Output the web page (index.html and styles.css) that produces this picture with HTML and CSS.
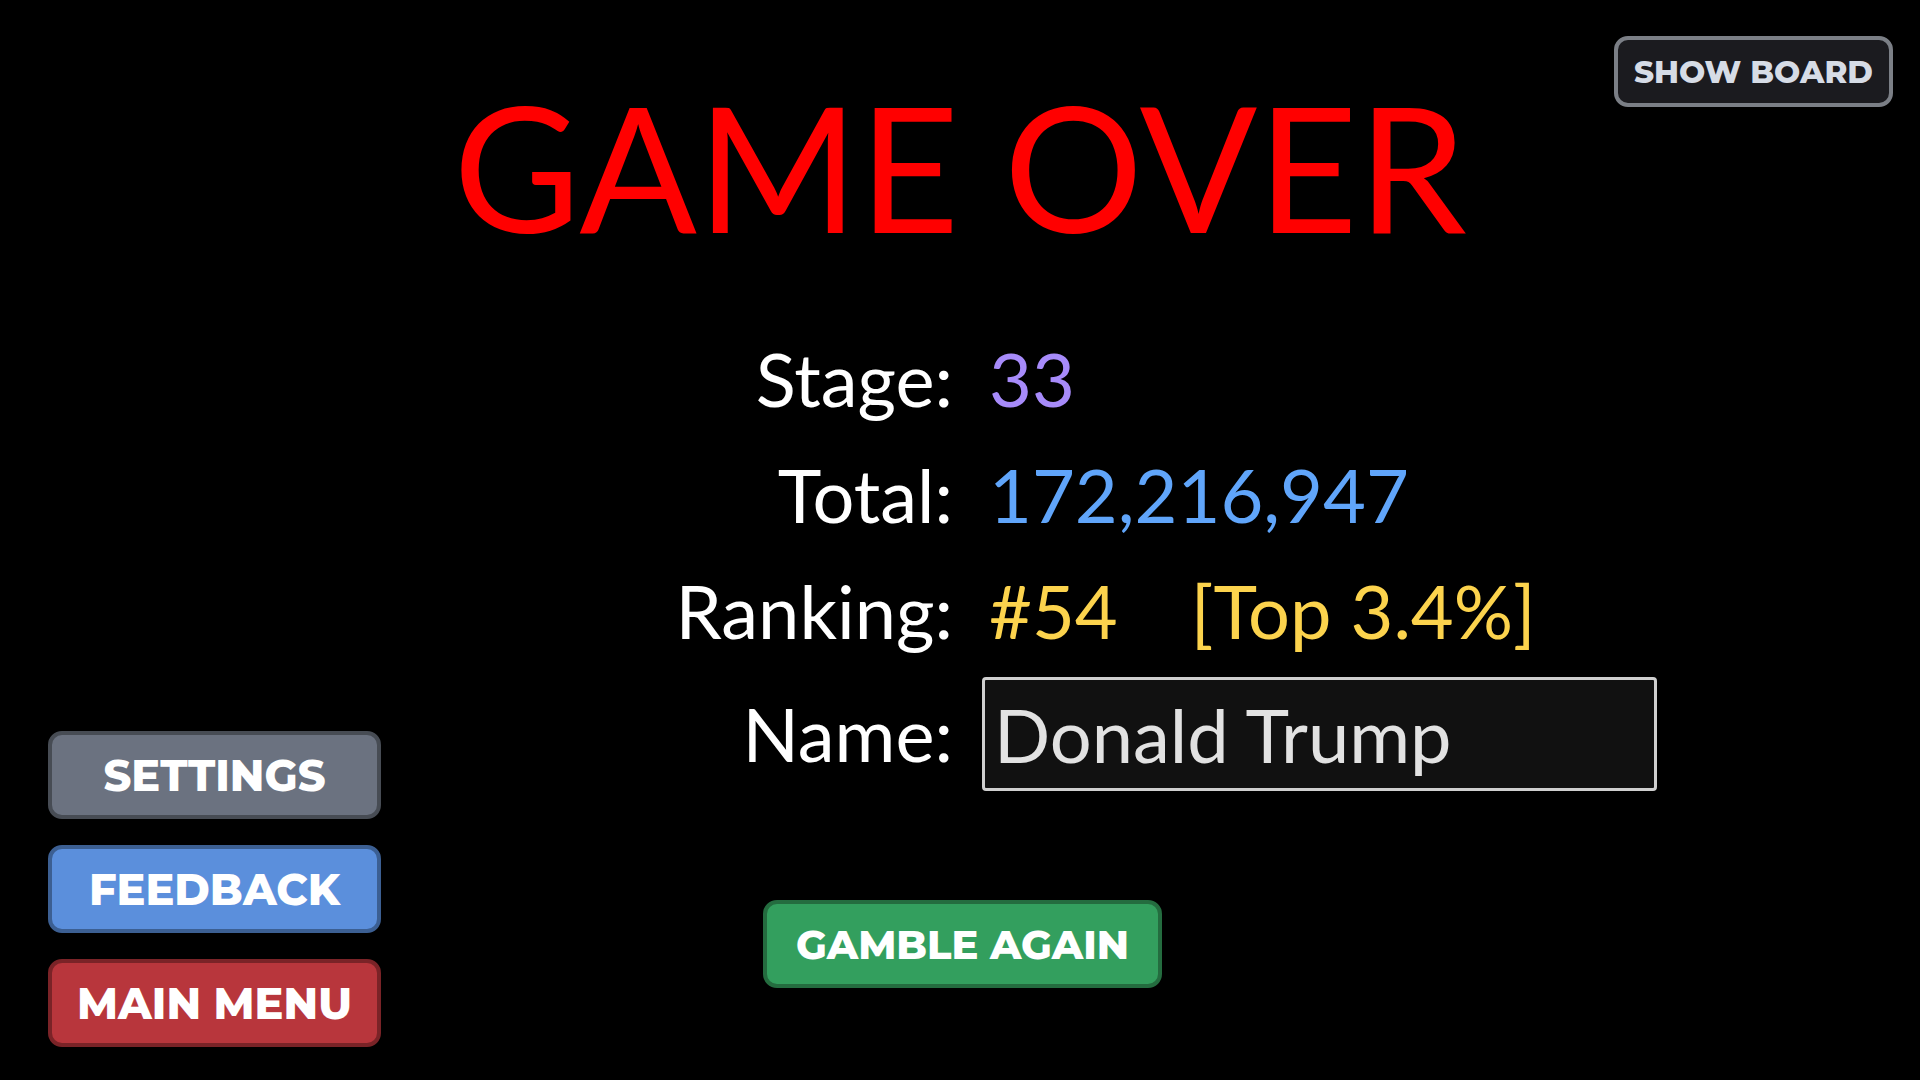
FILE: index.html
```html
<!DOCTYPE html>
<html lang="en">
<head>
    <meta charset="UTF-8">
    <meta name="viewport" content="width=device-width, initial-scale=1.0">
    <title>Game Over</title>
    <link rel="stylesheet" href="styles.css">
</head>
<body>
    <div class="screen">
        <main class="results">
            <h1 class="title">GAME OVER</h1>

            <div class="stats">
                <span class="label">Stage:</span>
                <span class="value stage">33</span>

                <span class="label">Total:</span>
                <span class="value total">172,216,947</span>

                <span class="label">Ranking:</span>
                <span class="value rank"><span>#54</span><span>[Top 3.4%]</span></span>

                <span class="label">Name:</span>
                <input class="name-input" type="text" value="Donald Trump">
            </div>

            <button class="btn btn-green gamble-button">Gamble Again</button>
        </main>

        <nav class="side-menu">
            <button class="btn btn-gray">Settings</button>
            <button class="btn btn-blue">Feedback</button>
            <button class="btn btn-red">Main Menu</button>
        </nav>

        <button class="show-board">Show Board</button>
    </div>
</body>
</html>
```

FILE: styles.css
```css
body {
    margin: 0;
    background-color: #000;
    color: #fff;
    font-family: Lato, "Noto Sans", sans-serif;
    overflow: hidden;
}

/* all three layers share the single grid cell */
.screen {
    display: grid;
    width: 1920px;
    height: 1080px;
}

.screen > * {
    grid-area: 1 / 1;
}

.results {
    display: flex;
    flex-direction: column;
    align-items: stretch;
}

.title {
    margin: 79px 0 0 0;
    font-size: 174px;
    font-weight: 400;
    line-height: 174px;
    color: #ff0000;
    text-align: center;
}

.stats {
    display: grid;
    grid-template-columns: 953px auto;
    column-gap: 36px;
    row-gap: 16px;
    align-items: center;
    margin-top: 76px;
    font-size: 74px;
    line-height: 100px;
}

.label {
    text-align: right;
}

.stage { color: #a78bfa; }
.total { color: #60a5fa; }

.rank {
    display: flex;
    gap: 73px;
    color: #fcd34d;
}

.name-input {
    width: 675px;
    height: 114px;
    box-sizing: border-box;
    margin-left: -7px;
    padding: 0 0 0 9px;
    background-color: #111;
    border: 3px solid #cfcfcf;
    border-radius: 4px;
    color: #e2e2e2;
    font-family: inherit;
    font-size: 74px;
    outline: none;
}

/* buttons */
.btn {
    box-sizing: border-box;
    height: 88px;
    border: 4px solid;
    border-radius: 14px;
    color: #fff;
    font-family: Montserrat, "DejaVu Sans", sans-serif;
    font-size: 43px;
    font-weight: 800;
    text-transform: uppercase;
    cursor: pointer;
}

.btn-gray {
    background-color: #6b7280;
    border-color: #474c54;
}

.btn-blue {
    background-color: #5b8fdc;
    border-color: #3c5f92;
}

.btn-red {
    background-color: #b8363c;
    border-color: #7a2327;
}

.btn-green {
    background-color: #339f5e;
    border-color: #246c3f;
}

.gamble-button {
    align-self: flex-start;
    width: 399px;
    margin: 109px 0 0 763px;
    font-size: 40px;
}

.side-menu {
    align-self: end;
    justify-self: start;
    display: flex;
    flex-direction: column;
    gap: 26px;
    margin: 0 0 33px 48px;
}

.side-menu .btn {
    width: 333px;
}

.show-board {
    align-self: start;
    justify-self: end;
    width: 279px;
    height: 71px;
    margin: 36px 27px 0 0;
    box-sizing: border-box;
    background-color: #1b1b1f;
    border: 4px solid #7b7f86;
    border-radius: 14px;
    color: #d6dce6;
    font-family: Montserrat, "DejaVu Sans", sans-serif;
    font-size: 31px;
    font-weight: 800;
    text-transform: uppercase;
    cursor: pointer;
}
```
